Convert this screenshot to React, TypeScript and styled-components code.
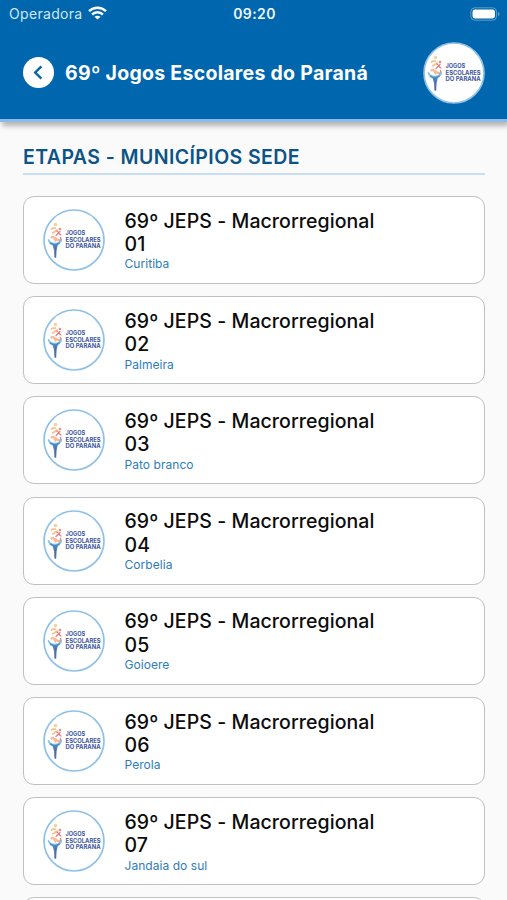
import React from "react";
import styled, { createGlobalStyle } from "styled-components";

const GlobalStyle = createGlobalStyle`
  * { box-sizing: border-box; }
  html, body { margin: 0; height: 900px; overflow: hidden; background: #fafafa; }
  body { font-family: Inter, "Liberation Sans", sans-serif; }
`;

const Screen = styled.div`
  width: 507px;
  height: 900px;
  overflow: hidden;
  background: #fafafa;
`;

const Header = styled.header`
  height: 122px;
  background: #0066ad;
  border-bottom: 3px solid #8cbce3;
  box-shadow: 2px 4px 5px rgba(0, 0, 0, 0.28);
  color: #fff;
`;

const StatusBar = styled.div`
  display: grid;
  grid-template-columns: 1fr auto 1fr;
  align-items: center;
  height: 28px;
  padding: 0 7px 0 9px;
`;

const Carrier = styled.div`
  display: flex;
  align-items: center;
  gap: 5px;
  font-size: 14px;
  line-height: 18px;
  letter-spacing: 0.32px;
  color: #d3e6f5;

  svg { margin-top: -2px; }
`;

const Clock = styled.div`
  margin-top: -1px;
  font-size: 14px;
  font-weight: 600;
  letter-spacing: 0.4px;
  color: #eef7ff;
`;

const BatterySlot = styled.div`
  display: flex;
  justify-content: flex-end;
  margin-top: -1px;
`;

const TitleBar = styled.div`
  display: flex;
  align-items: center;
  height: 89px;
  padding: 0 22px 0 23px;
`;

const BackButton = styled.button`
  display: flex;
  align-items: center;
  justify-content: center;
  width: 31px;
  height: 31px;
  padding: 0;
  border: 0;
  border-radius: 50%;
  background: #fff;
`;

const Title = styled.h1`
  flex: 1;
  margin: 0 0 0 11px;
  font-size: 19.5px;
  line-height: 24px;
  font-weight: 700;
  letter-spacing: 0.28px;
  white-space: nowrap;
`;

const Content = styled.main`
  padding: 23px 22px 0 23px;
`;

const SectionTitle = styled.h2`
  height: 29.500px;
  margin: 0 0 21.500px;
  border-bottom: 2px solid #c8dff2;
  font-size: 19.5px;
  line-height: 24px;
  font-weight: 600;
  letter-spacing: 0.42px;
  color: #0d5386;
`;

const StageList = styled.div`
  display: flex;
  flex-direction: column;
  gap: 12.2px;
`;

const StageCard = styled.article`
  display: flex;
  align-items: center;
  height: 88px;
  padding: 0 60px 0 19px;
  border: 1.5px solid #c0c0c2;
  border-radius: 11px;
  background: #fff;
`;

const StageInfo = styled.div`
  margin-left: 19.5px;
  padding-top: 1px;
  width: 265px;
`;

const StageName = styled.h3`
  margin: 0;
  font-size: 19.5px;
  line-height: 23.4px;
  font-weight: 500;
  letter-spacing: 0.07px;
  color: #0c0c0c;
`;

const StageCity = styled.p`
  margin: 0;
  font-size: 12px;
  line-height: 15px;
  letter-spacing: 0.05px;
  color: #2d7dbd;
`;

const LogoSvg = styled.svg`
  display: block;
  flex: none;
  width: 62px;
  height: 62px;
`;

const LogoText = styled.text`
  font-family: Inter, sans-serif;
  font-size: 5.8px;
  font-weight: 700;
  fill: #3c57a0;
`;

function EventLogo() {
  return (
    <LogoSvg viewBox="0 0 62 62">
      <circle cx="31" cy="31" r="30" fill="#fff" stroke="#8fc1e8" strokeWidth="1.7" />
      <g fill="none" strokeLinecap="round">
        <circle cx="12.5" cy="15.5" r="1.8" fill="#f9cf9a" />
        <circle cx="17" cy="20" r="1.3" fill="#ee8a7d" />
        <path d="M8.5 20c1.5-2 3 0 4-1M9.5 24c3-1 3-3 5-3" stroke="#f9c08f" strokeWidth="1.7" />
        <path d="M13.5 22c2 0 2 3 4.5 4M17 22.5l-4 4" stroke="#e57b7e" strokeWidth="1.2" />
        <path d="M8.5 28.5c2-2 3 1 4 3M12 29c2 0 2 3 4 2" stroke="#f8bb98" strokeWidth="2.2" />
        <path d="M17.5 28.5c1 2 0 3-1 4" stroke="#ee8583" strokeWidth="1.5" />
        <path d="M5.5 31c1 3 4 4 8 3.5 3-.4 5-2 4.5-4" stroke="#86c1e8" strokeWidth="1.8" />
        <path d="M7.5 34.3c3 2 6 2 8.5 0" stroke="#4b92cb" strokeWidth="1.8" />
      </g>
      <path d="M9.5 35.5h5.3l-1.2 6-.4 7.5-1.8-.6-.3-7z" fill="#4d83bc" />
      <path d="M12.4 38l-.1 10" stroke="#655d94" strokeWidth=".8" />
      <LogoText x="22.6" y="26.4" textLength="19.6" lengthAdjust="spacingAndGlyphs">JOGOS</LogoText>
      <LogoText x="22.6" y="32.6" textLength="35" lengthAdjust="spacingAndGlyphs">ESCOLARES</LogoText>
      <LogoText x="22.6" y="38.8" textLength="35" lengthAdjust="spacingAndGlyphs">DO PARANÁ</LogoText>
    </LogoSvg>
  );
}

function WifiIcon() {
  return (
    <svg width="19" height="14" viewBox="0 0 19 14" fill="none" stroke="#fff" strokeWidth="2.5">
      <path d="M1 5.1c4.8-4.6 12.2-4.6 17 0M4.1 8.5c3.1-2.9 7.7-2.9 10.8 0" />
      <path d="M9.5 13.6L6.5 10.8c1.7-1.500 4.300-1.500 6 0z" fill="#fff" stroke="none" />
    </svg>
  );
}

function BatteryIcon() {
  return (
    <svg width="30" height="14" viewBox="0 0 30 14">
      <rect x=".8" y=".8" width="25.8" height="12.4" rx="4" fill="none" stroke="#5d9eca" strokeWidth="1" />
      <rect x="2.5" y="2.5" width="22.5" height="9" rx="2.4" fill="#fff" />
      <path d="M28 5c2 .4 2 3.6 0 4z" fill="#5d9eca" />
    </svg>
  );
}

const stages = [
  ["01", "Curitiba"],
  ["02", "Palmeira"],
  ["03", "Pato branco"],
  ["04", "Corbelia"],
  ["05", "Goioere"],
  ["06", "Perola"],
  ["07", "Jandaia do sul"],
];

export default function App() {
  return (
    <Screen>
      <GlobalStyle />
      <Header>
        <StatusBar>
          <Carrier>Operadora <WifiIcon /></Carrier>
          <Clock>09:20</Clock>
          <BatterySlot><BatteryIcon /></BatterySlot>
        </StatusBar>
        <TitleBar>
          <BackButton aria-label="Voltar">
            <svg width="31" height="31" viewBox="0 0 31 31" fill="none" stroke="#0066ad" strokeWidth="2.4">
              <path d="M18.4 9.3L12.2 15.5l6.2 6.2" />
            </svg>
          </BackButton>
          <Title>69º Jogos Escolares do Paraná</Title>
          <EventLogo />
        </TitleBar>
      </Header>
      <Content>
        <SectionTitle>ETAPAS - MUNICÍPIOS SEDE</SectionTitle>
        <StageList>
          {stages.map(([number, city]) => (
            <StageCard key={number}>
              <EventLogo />
              <StageInfo>
                <StageName>69º JEPS - Macrorregional {number}</StageName>
                <StageCity>{city}</StageCity>
              </StageInfo>
            </StageCard>
          ))}
          <StageCard />
        </StageList>
      </Content>
    </Screen>
  );
}
